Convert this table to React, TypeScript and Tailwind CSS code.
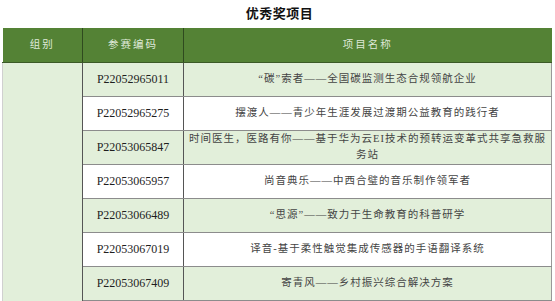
const rows: { code: string; name: string; green: boolean }[] = [
  { code: "P22052965011", name: "“碳”索者——全国碳监测生态合规领航企业", green: true },
  { code: "P22052965275", name: "摆渡人——青少年生涯发展过渡期公益教育的践行者", green: false },
  {
    code: "P22053065847",
    name: "时间医生，医路有你——基于华为云EI技术的预转运变革式共享急救服务站",
    green: true,
  },
  { code: "P22053065957", name: "尚音典乐——中西合璧的音乐制作领军者", green: false },
  { code: "P22053066489", name: "“思源”——致力于生命教育的科普研学", green: true },
  { code: "P22053067019", name: "译音-基于柔性触觉集成传感器的手语翻译系统", green: false },
  { code: "P22053067409", name: "寄青风——乡村振兴综合解决方案", green: true },
  { code: "", name: "", green: false },
];

export default function App() {
  return (
    <div className="w-[555px] h-[301px] overflow-hidden bg-white font-['Liberation_Serif','Noto_Sans_CJK_SC',serif]">
      <div className="h-[28px] flex items-center justify-center pl-[4px] text-[13px] font-bold text-[#111] tracking-[0.5px]">
        优秀奖项目
      </div>
      <table className="ml-[2px] w-[549px] border-collapse table-fixed">
        <colgroup>
          <col className="w-[80px]" />
          <col className="w-[101px]" />
          <col className="w-[368px]" />
        </colgroup>
        <thead>
          <tr className="h-[34px] bg-[#548235] text-[#dfe9d8] text-[10.5px] tracking-[2px]">
            <th className="font-normal border-r border-[#2f4a1f] border-b border-b-[#3b5a27]">组别</th>
            <th className="font-normal border-r border-[#2f4a1f] border-b border-b-[#3b5a27]">参赛编码</th>
            <th className="font-normal border-b border-b-[#3b5a27]">项目名称</th>
          </tr>
        </thead>
        <tbody>
          {rows.map((r, i) => (
            <tr key={i} className={`h-[34px] ${r.green ? "bg-[#e2efda]" : "bg-white"}`}>
              {i === 0 && (
                <td rowSpan={rows.length} className="bg-[#e2efda] border-l border-l-[#d0d0d0] border-r border-r-[#555]" />
              )}
              <td className="text-center text-[12px] text-[#1e1e1e] border-r border-r-[#555] border-b border-b-[#8c8c8c]">
                {r.code}
              </td>
              <td className="px-[2px] text-center text-[10.5px] leading-[16px] tracking-[1px] text-[#444] border-b border-b-[#8c8c8c] border-r border-r-[#999]">
                {r.name}
              </td>
            </tr>
          ))}
        </tbody>
      </table>
    </div>
  );
}
